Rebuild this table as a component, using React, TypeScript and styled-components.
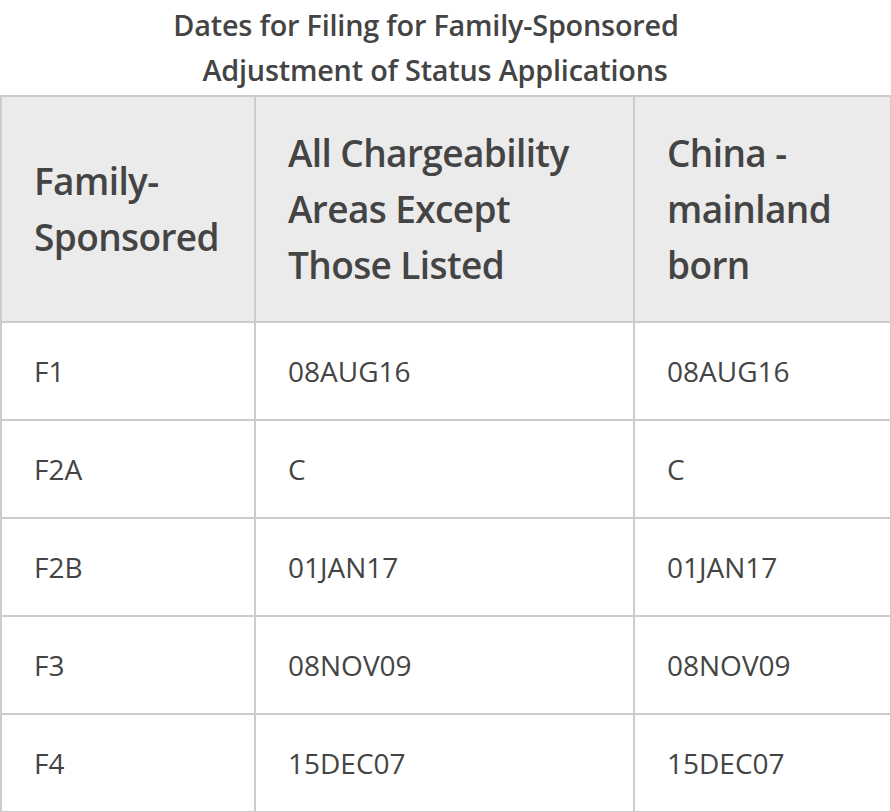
import React from "react";
import styled, { createGlobalStyle } from "styled-components";

const Global = createGlobalStyle`
  html, body { margin: 0; padding: 0; background: #fff; }
  body { font-family: "Open Sans", "Noto Sans", sans-serif; color: #444; }
`;

const Table = styled.table`
  width: 890px;
  border-collapse: collapse;
  table-layout: fixed;
  font-family: "Open Sans", "Noto Sans", sans-serif;
  color: #444;
`;

const Caption = styled.caption`
  font-size: 28.8px;
  font-weight: 600;
  line-height: 45px;
  padding: 2px 0 3px;
  text-align: center;
  color: #444;
  letter-spacing: -0.2px;
`;

const Line = styled.span<{ $indent: number }>`
  display: block;
  padding-right: ${(p) => p.$indent}px;
`;

const Col = styled.col<{ $w: number }>`
  width: ${(p) => p.$w}px;
`;

const Th = styled.th`
  background: #ebebeb;
  border: 2px solid #ccc;
  padding: 28px 32px;
  font-size: 37px;
  font-weight: 600;
  letter-spacing: -0.6px;
  line-height: 56px;
  text-align: left;
  vertical-align: middle;
`;

const Td = styled.td`
  border: 2px solid #ccc;
  padding: 28px 32px;
  font-size: 28px;
  font-weight: 400;
  line-height: 40px;
  vertical-align: middle;
`;

const rows = [
  ["F1", "08AUG16", "08AUG16"],
  ["F2A", "C", "C"],
  ["F2B", "01JAN17", "01JAN17"],
  ["F3", "08NOV09", "08NOV09"],
  ["F4", "15DEC07", "15DEC07"],
];

export default function App() {
  return (
    <>
      <Global />
      <Table>
        <Caption>
          <Line $indent={40}>Dates for Filing for Family-Sponsored</Line>
          <Line $indent={22}>Adjustment of Status Applications</Line>
        </Caption>
        <colgroup>
          <Col $w={254} />
          <Col $w={379} />
          <Col $w={257} />
        </colgroup>
        <thead>
          <tr>
            <Th>Family-Sponsored</Th>
            <Th>All Chargeability Areas Except Those Listed</Th>
            <Th>China - mainland born</Th>
          </tr>
        </thead>
        <tbody>
          {rows.map((r) => (
            <tr key={r[0]}>
              {r.map((c, i) => (
                <Td key={i}>{c}</Td>
              ))}
            </tr>
          ))}
        </tbody>
      </Table>
    </>
  );
}
